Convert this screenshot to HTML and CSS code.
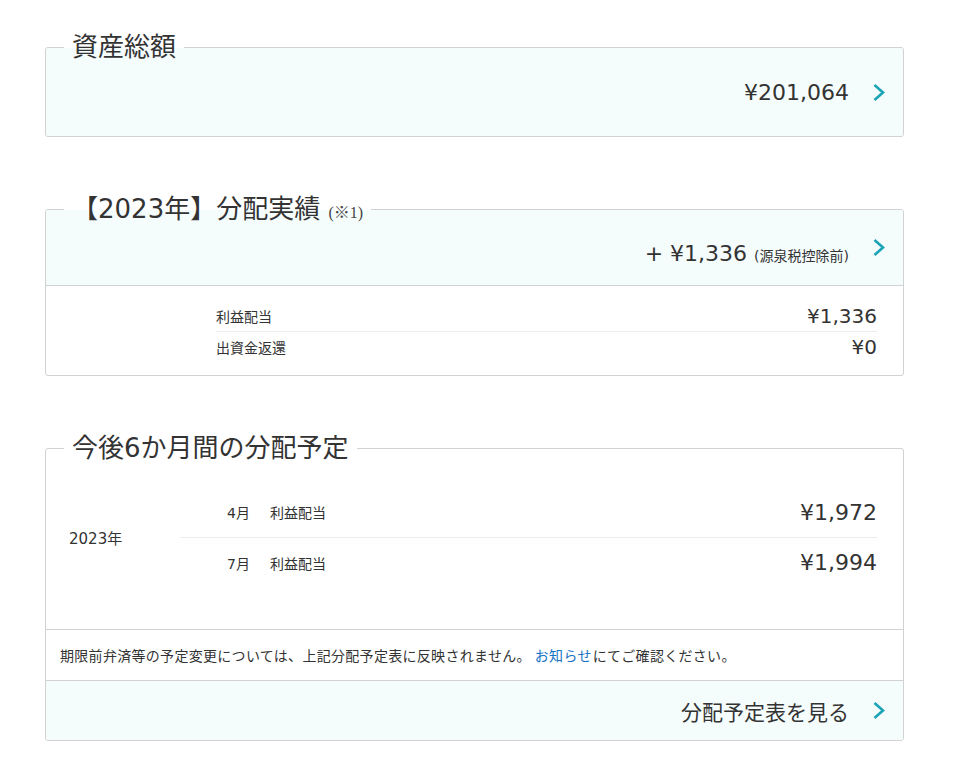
FILE: index.html
```html
<!DOCTYPE html>
<html lang="ja">

<head>
    <meta charset="UTF-8">
    <meta name="viewport" content="width=device-width, initial-scale=1.0">
    <title>資産状況</title>
    <link rel="stylesheet" href="styles.css">
</head>

<body>
    <div class="page">
        <!-- 資産総額 -->
        <div class="section">
            <h2 class="section-title">資産総額</h2>
            <div class="card">
                <a class="card-link total" href="#">
                    <span class="amount-lg">¥201,064</span>
                    <svg class="chevron" width="12" height="19" viewBox="0 0 12 19"><polyline points="1.5,2 10,9.5 1.5,17" /></svg>
                </a>
            </div>
        </div>

        <!-- 分配実績 -->
        <div class="section">
            <h2 class="section-title">【2023年】分配実績 <span class="note-mark">(※1)</span></h2>
            <div class="card">
                <a class="card-link results-head" href="#">
                    <span class="amount-lg results-amount">+ ¥1,336 <span class="tax-note">(源泉税控除前)</span></span>
                    <svg class="chevron" width="12" height="19" viewBox="0 0 12 19"><polyline points="1.5,2 10,9.5 1.5,17" /></svg>
                </a>
                <div class="results-body">
                    <div class="result-row">
                        <span class="label">利益配当</span>
                        <span class="amount-sm">¥1,336</span>
                    </div>
                    <div class="result-row">
                        <span class="label">出資金返還</span>
                        <span class="amount-sm">¥0</span>
                    </div>
                </div>
            </div>
        </div>

        <!-- 分配予定 -->
        <div class="section">
            <h2 class="section-title">今後6か月間の分配予定</h2>
            <div class="card">
                <div class="plan">
                    <div class="plan-year">2023年</div>
                    <div class="plan-rows">
                        <div class="plan-row">
                            <span class="plan-month">4月</span>
                            <span class="label">利益配当</span>
                            <span class="amount-md">¥1,972</span>
                        </div>
                        <div class="plan-row">
                            <span class="plan-month">7月</span>
                            <span class="label">利益配当</span>
                            <span class="amount-md">¥1,994</span>
                        </div>
                    </div>
                </div>
                <div class="plan-notice">
                    期限前弁済等の予定変更については、上記分配予定表に反映されません。 <a href="#">お知らせ</a>にてご確認ください。
                </div>
                <a class="card-link plan-foot" href="#">
                    <span class="foot-text">分配予定表を見る</span>
                    <svg class="chevron" width="12" height="19" viewBox="0 0 12 19"><polyline points="1.5,2 10,9.5 1.5,17" /></svg>
                </a>
            </div>
        </div>
    </div>
</body>

</html>
```

FILE: styles.css
```css
/* 全体 */
body {
    margin: 0;
    padding: 0;
    background: #fff;
    color: #333;
    font-family: "DejaVu Sans", "Noto Sans CJK JP", sans-serif;
}

.page {
    width: 859px;
    margin-left: 45px;
    padding-top: 32px;
}

.section {
    margin-bottom: 57px;
}

/* 見出し（枠線の上に重ねる） */
.section-title {
    position: relative;
    width: fit-content;
    height: 30px;
    margin: 0 0 -15px 19px;
    padding: 0 8px;
    background: linear-gradient(#fff 0, #fff 16px, transparent 16px);
    font-size: 26px;
    font-weight: normal;
    line-height: 30px;
}

.note-mark {
    font-family: "Liberation Serif", "Noto Sans CJK JP", serif;
    font-size: 16px;
    line-height: 1;
    color: #444;
}

/* カード */
.card {
    border: 1px solid #d2d2d2;
    border-radius: 3px;
    overflow: hidden;
}

.card-link {
    display: flex;
    align-items: center;
    justify-content: flex-end;
    background: #f5fcfc;
    color: #333;
    text-decoration: none;
    padding-right: 18px;
}

.chevron {
    margin-left: 24px;
    fill: none;
    stroke: #1ba3b6;
    stroke-width: 2.6;
}

.amount-lg {
    font-size: 22px;
}

.total {
    height: 88px;
}

/* 分配実績 */
.results-head {
    height: 75px;
    border-bottom: 1px solid #d2d2d2;
}

.results-amount {
    padding-top: 12px;
}

.tax-note {
    font-size: 14px;
}

.results-body {
    padding: 14px 26px 13px 170px;
}

.result-row {
    display: flex;
    justify-content: space-between;
    align-items: center;
    height: 31px;
    box-sizing: border-box;
}

.result-row + .result-row {
    border-top: 1px solid #ececec;
}

.label {
    font-size: 14px;
}

.amount-sm {
    font-size: 20px;
}

/* 分配予定 */
.plan {
    display: flex;
    align-items: center;
    padding: 38px 26px 42px 0;
}

.plan-year {
    width: 111px;
    padding-left: 23px;
    font-size: 15px;
}

.plan-rows {
    flex: 1;
}

.plan-row {
    display: flex;
    align-items: center;
    height: 50px;
    box-sizing: border-box;
}

.plan-row + .plan-row {
    border-top: 1px solid #ececec;
}

.plan-month {
    width: 70px;
    margin-right: 20px;
    text-align: right;
    font-size: 14px;
}

.amount-md {
    margin-left: auto;
    font-size: 22px;
}

.plan-notice {
    border-top: 1px solid #d2d2d2;
    border-bottom: 1px solid #d2d2d2;
    height: 50px;
    padding: 0 14px;
    display: flex;
    align-items: center;
    font-size: 14px;
    letter-spacing: 0.3px;
}

.plan-notice a {
    color: #1a74c4;
    text-decoration: none;
    margin: 0 1px 0 4px;
}

.plan-foot {
    height: 59px;
}

.foot-text {
    font-size: 21px;
}
```
